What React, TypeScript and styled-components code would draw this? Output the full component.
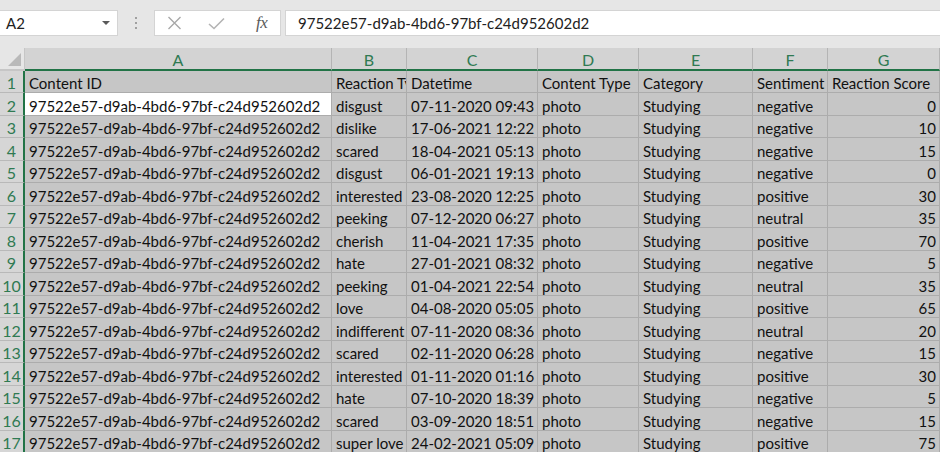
import React from "react";
import styled, { createGlobalStyle } from "styled-components";

const GlobalStyle = createGlobalStyle`
  html, body { margin: 0; padding: 0; background: #e6e6e6; }
  #root { width: 940px; height: 452px; overflow: hidden; }
  * { box-sizing: border-box; }
`;

const COLS = "25px 307px 75px 131px 101px 114px 75px 112px";
const FONT = `Lato, "Noto Sans", sans-serif`;

const Frame = styled.div`
  width: 940px;
  height: 452px;
  overflow: hidden;
  display: flex;
  flex-direction: column;
  background: #e6e6e6;
  font-family: ${FONT};
`;

const Toolbar = styled.div`
  height: 48px;
  flex: none;
  display: flex;
  align-items: flex-start;
  padding-top: 10px;
  background: #e6e6e6;
`;

const NameBox = styled.div`
  width: 118px;
  height: 26px;
  background: #fff;
  border: 1px solid #d4d4d4;
  border-left: none;
  display: flex;
  align-items: center;
  justify-content: space-between;
  padding: 0 7px 0 6px;
  font-size: 15px;
  color: #222;
`;

const Caret = styled.span`
  width: 0;
  height: 0;
  border-left: 4px solid transparent;
  border-right: 4px solid transparent;
  border-top: 4px solid #5a5a5a;
`;

const Dots = styled.div`
  width: 36px;
  height: 26px;
  display: flex;
  flex-direction: column;
  align-items: center;
  justify-content: center;
  gap: 3px;
  & > span {
    width: 2px;
    height: 2px;
    background: #a0a0a0;
  }
`;

const FuncBox = styled.div`
  width: 127px;
  height: 26px;
  background: #fff;
  border: 1px solid #d4d4d4;
  display: flex;
  align-items: center;
  padding-left: 12px;
  gap: 26px;
`;

const Fx = styled.span`
  font-family: "Liberation Serif", "DejaVu Serif", serif;
  font-style: italic;
  font-size: 17px;
  color: #5a5a5a;
  margin-left: 5px;
  letter-spacing: -0.5px;
`;

const FormulaInput = styled.div`
  flex: 1;
  height: 26px;
  margin-left: 4px;
  background: #fff;
  border: 1px solid #d4d4d4;
  border-right: none;
  display: flex;
  align-items: center;
  padding-left: 12px;
  font-size: 15px;
  color: #222;
`;

const Sheet = styled.div`
  flex: 1;
  overflow: hidden;
  display: flex;
  flex-direction: column;
`;

const HeaderRow = styled.div`
  display: grid;
  grid-template-columns: ${COLS};
  height: 23px;
  flex: none;
`;

const Corner = styled.div`
  position: relative;
  background: #e6e6e6;
  border-right: 1px solid #c6c6c6;
  border-bottom: 2px solid #c6c6c6;
  &::after {
    content: "";
    position: absolute;
    right: 3px;
    bottom: 3px;
    width: 0;
    height: 0;
    border-left: 13px solid transparent;
    border-bottom: 13px solid #b9b9b9;
  }
`;

const ColHead = styled.div`
  background: #d3d3d3;
  border-right: 1px solid #b4b4b4;
  border-bottom: 2px solid #217346;
  color: #2f7a52;
  font-size: 16px;
  display: flex;
  align-items: center;
  justify-content: center;
  padding-top: 1px;
`;

const Row = styled.div<{ $tall: boolean }>`
  display: grid;
  grid-template-columns: ${COLS};
  height: ${(p) => (p.$tall ? 23 : 22)}px;
  flex: none;
`;

const RowHead = styled.div`
  background: #d6d6d6;
  border-bottom: 1px solid #b9b9b9;
  border-right: 2px solid #217346;
  color: #2f7a52;
  font-size: 16px;
  display: flex;
  align-items: flex-end;
  justify-content: center;
  padding-bottom: 0;
`;

const Cell = styled.div<{ $active?: boolean; $num?: boolean }>`
  background: ${(p) => (p.$active ? "#ffffff" : "#c6c6c6")};
  border-right: 1px solid #acacac;
  border-bottom: 1px solid #acacac;
  color: #111;
  font-size: 15px;
  white-space: nowrap;
  overflow: hidden;
  display: flex;
  align-items: flex-end;
  justify-content: ${(p) => (p.$num ? "flex-end" : "flex-start")};
  padding: 0 ${(p) => (p.$num ? "3px" : "0")} 0 ${(p) => (p.$num ? "0" : "4px")};
`;

const ID = "97522e57-d9ab-4bd6-97bf-c24d952602d2";

type R = [string, string, string, string];
const data: R[] = [
  ["disgust", "07-11-2020 09:43", "negative", "0"],
  ["dislike", "17-06-2021 12:22", "negative", "10"],
  ["scared", "18-04-2021 05:13", "negative", "15"],
  ["disgust", "06-01-2021 19:13", "negative", "0"],
  ["interested", "23-08-2020 12:25", "positive", "30"],
  ["peeking", "07-12-2020 06:27", "neutral", "35"],
  ["cherish", "11-04-2021 17:35", "positive", "70"],
  ["hate", "27-01-2021 08:32", "negative", "5"],
  ["peeking", "01-04-2021 22:54", "neutral", "35"],
  ["love", "04-08-2020 05:05", "positive", "65"],
  ["indifferent", "07-11-2020 08:36", "neutral", "20"],
  ["scared", "02-11-2020 06:28", "negative", "15"],
  ["interested", "01-11-2020 01:16", "positive", "30"],
  ["hate", "07-10-2020 18:39", "negative", "5"],
  ["scared", "03-09-2020 18:51", "negative", "15"],
  ["super love", "24-02-2021 05:09", "positive", "75"],
];

const letters = ["A", "B", "C", "D", "E", "F", "G"];

export default function App() {
  return (
    <Frame>
      <GlobalStyle />
      <Toolbar>
        <NameBox>
          <span>A2</span>
          <Caret />
        </NameBox>
        <Dots>
          <span />
          <span />
          <span />
        </Dots>
        <FuncBox>
          <svg width="15" height="14" viewBox="0 0 15 14">
            <path d="M1.5 1 L13.5 13 M13.5 1 L1.5 13" stroke="#a8a8a8" strokeWidth="1.4" fill="none" />
          </svg>
          <svg width="17" height="13" viewBox="0 0 17 13">
            <path d="M1 7 L6 11.5 L16 1.5" stroke="#b4b4b4" strokeWidth="1.6" fill="none" />
          </svg>
          <Fx>fx</Fx>
        </FuncBox>
        <FormulaInput>{ID}</FormulaInput>
      </Toolbar>
      <Sheet>
        <HeaderRow>
          <Corner />
          {letters.map((l) => (
            <ColHead key={l}>{l}</ColHead>
          ))}
        </HeaderRow>
        <Row $tall={false}>
          <RowHead>1</RowHead>
          <Cell>Content ID</Cell>
          <Cell>Reaction Type</Cell>
          <Cell>Datetime</Cell>
          <Cell>Content Type</Cell>
          <Cell>Category</Cell>
          <Cell>Sentiment</Cell>
          <Cell>Reaction Score</Cell>
        </Row>
        {data.map((d, i) => (
          <Row key={i} $tall={i % 2 === 0}>
            <RowHead>{i + 2}</RowHead>
            <Cell $active={i === 0}>{ID}</Cell>
            <Cell>{d[0]}</Cell>
            <Cell>{d[1]}</Cell>
            <Cell>photo</Cell>
            <Cell>Studying</Cell>
            <Cell>{d[2]}</Cell>
            <Cell $num>{d[3]}</Cell>
          </Row>
        ))}
      </Sheet>
    </Frame>
  );
}
